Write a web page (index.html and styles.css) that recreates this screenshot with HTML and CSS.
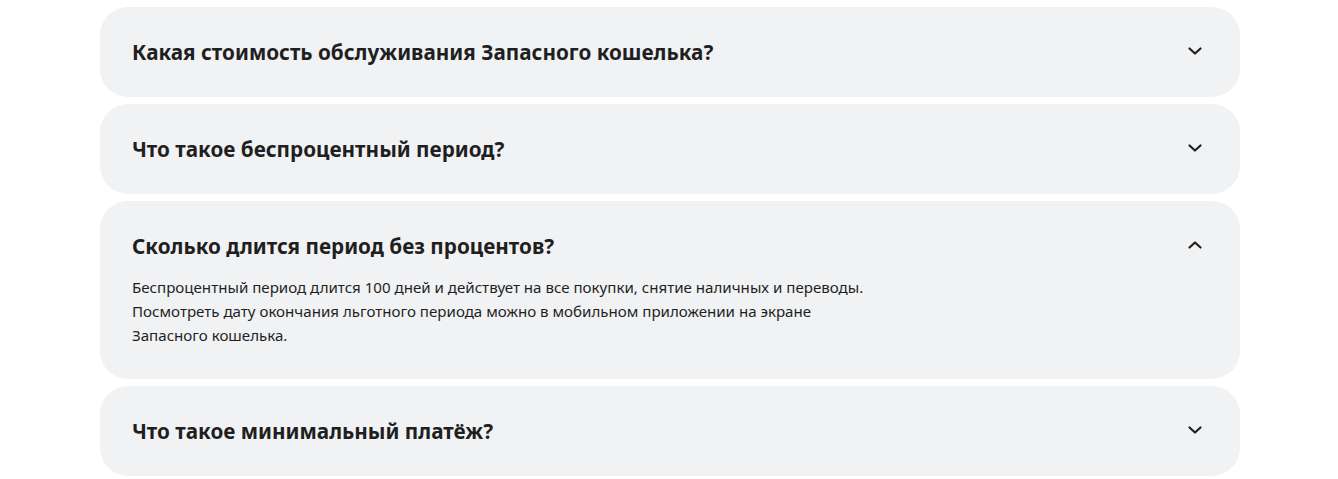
FILE: index.html
```html
<!DOCTYPE html>
<html lang="ru">
<head>
  <meta charset="UTF-8">
  <title>Вопросы и ответы</title>
  <link rel="stylesheet" href="styles.css">
</head>
<body>
  <div class="faq">
    <div class="faq-item">
      <div class="faq-head">
        <h3>Какая стоимость обслуживания Запасного кошелька?</h3>
        <svg class="chevron" width="16" height="10" viewBox="0 0 16 10"><path d="M2.5 2.5l5.5 5 5.5-5" fill="none" stroke="#1f1f1f" stroke-width="2.2" stroke-linecap="round" stroke-linejoin="round"/></svg>
      </div>
    </div>

    <div class="faq-item">
      <div class="faq-head">
        <h3>Что такое беспроцентный период?</h3>
        <svg class="chevron" width="16" height="10" viewBox="0 0 16 10"><path d="M2.5 2.5l5.5 5 5.5-5" fill="none" stroke="#1f1f1f" stroke-width="2.2" stroke-linecap="round" stroke-linejoin="round"/></svg>
      </div>
    </div>

    <div class="faq-item open">
      <div class="faq-head">
        <h3>Сколько длится период без процентов?</h3>
        <svg class="chevron" width="16" height="10" viewBox="0 0 16 10"><path d="M2.5 7.5l5.5-5 5.5 5" fill="none" stroke="#1f1f1f" stroke-width="2.2" stroke-linecap="round" stroke-linejoin="round"/></svg>
      </div>
      <p class="faq-body">Беспроцентный период длится 100 дней и действует на все покупки, снятие наличных и переводы. Посмотреть дату окончания льготного периода можно в мобильном приложении на экране Запасного кошелька.</p>
    </div>

    <div class="faq-item">
      <div class="faq-head">
        <h3>Что такое минимальный платёж?</h3>
        <svg class="chevron" width="16" height="10" viewBox="0 0 16 10"><path d="M2.5 2.5l5.5 5 5.5-5" fill="none" stroke="#1f1f1f" stroke-width="2.2" stroke-linecap="round" stroke-linejoin="round"/></svg>
      </div>
    </div>
  </div>
</body>
</html>
```

FILE: styles.css
```css
body {
  margin: 0;
  padding: 0 98px 0 100px;
  background-color: #fff;
  font-family: "Noto Sans", "Open Sans", Arial, sans-serif;
  color: #1f1f1f;
}

.faq {
  width: 1140px;
  padding-top: 7px;
  display: flex;
  flex-direction: column;
  gap: 7px;
}

.faq-item {
  background-color: #f1f2f4;
  border-radius: 28px;
  padding: 31px 37px 31px 32px;
}

.faq-head {
  display: flex;
  align-items: center;
  justify-content: space-between;
  height: 28px;
}

.faq-head h3 {
  margin: 0;
  font-size: 20.7px;
  font-weight: 700;
  line-height: 28px;
}

.chevron {
  margin-top: -3px;
}

.faq-item.open {
  padding-bottom: 32px;
}

.faq-body {
  margin: 15px 0 0;
  max-width: 745px;
  font-size: 15.1px;
  line-height: 24px;
}
```
